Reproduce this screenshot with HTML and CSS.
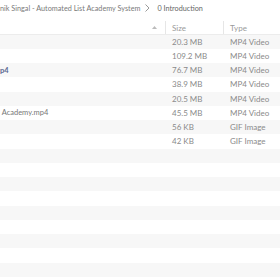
FILE: index.html
```html
<!DOCTYPE html>
<html>
<head>
<meta charset="utf-8">
<link rel="stylesheet" href="styles.css">
</head>
<body>
<div class="crumbs">
  <span class="crumb">nik Singal - Automated List Academy System</span>
  <svg class="chev" width="5" height="8" viewBox="0 0 5 8"><path d="M0.5 0.5 L4 4 L0.5 7.5" fill="none" stroke="#999" stroke-width="1"/></svg>
  <span class="crumb cur">0 Introduction</span>
</div>
<div class="list">
  <div class="row head">
    <div class="c name"><svg class="sort" width="5" height="3" viewBox="0 0 5 3"><path d="M0 3 L2.5 0 L5 3 Z" fill="#bbb"/></svg></div>
    <div class="c size">Size</div>
    <div class="c type">Type</div>
  </div>
  <div class="row"><div class="c name"></div><div class="c size">20.3 MB</div><div class="c type">MP4 Video</div></div>
  <div class="row"><div class="c name"></div><div class="c size">109.2 MB</div><div class="c type">MP4 Video</div></div>
  <div class="row"><div class="c name hl">p4</div><div class="c size">76.7 MB</div><div class="c type">MP4 Video</div></div>
  <div class="row"><div class="c name"></div><div class="c size">38.9 MB</div><div class="c type">MP4 Video</div></div>
  <div class="row"><div class="c name"></div><div class="c size">20.5 MB</div><div class="c type">MP4 Video</div></div>
  <div class="row"><div class="c name">&nbsp;Academy.mp4</div><div class="c size">45.5 MB</div><div class="c type">MP4 Video</div></div>
  <div class="row"><div class="c name"></div><div class="c size">56 KB</div><div class="c type">GIF Image</div></div>
  <div class="row"><div class="c name"></div><div class="c size">42 KB</div><div class="c type">GIF Image</div></div>
  <div class="row"></div>
  <div class="row"></div>
  <div class="row"></div>
  <div class="row"></div>
  <div class="row"></div>
  <div class="row"></div>
  <div class="row"></div>
  <div class="row"></div>
  <div class="row"></div>
  <div class="row"></div>
</div>
</body>
</html>
```

FILE: styles.css
```css
html, body {
  margin: 0;
  padding: 0;
  background: #fff;
  overflow: hidden;
  width: 280px;
  height: 280px;
}
body {
  font-family: "Lato", "Open Sans", sans-serif;
  font-size: 8px;
  color: #8a8a8a;
}
.crumbs {
  height: 16px;
  display: flex;
  align-items: center;
  white-space: nowrap;
  padding-left: 0;
  font-size: 7.25px;
}
.crumb {
  color: #7a7a7a;
}
.crumb.cur {
  color: #666;
  margin-left: 7px;
}
.chev {
  margin-left: 5px;
}
.list {
  padding-top: 5px;
}
.row {
  display: grid;
  grid-template-columns: 165px 58px 1fr;
  height: 14.25px;
  align-items: center;
  white-space: nowrap;
}
.row:nth-child(even) {
  background: #f7f7f7;
}
.row.head {
  height: 13.5px;
  border-bottom: 1px solid #ececec;
  box-sizing: border-box;
  align-items: stretch;
}
.row.head .c {
  display: flex;
  align-items: center;
  color: #9a9a9a;
  padding-top: 1px;
}
.row.head .size,
.row.head .type {
  border-left: 1px solid #e6e6e6;
}
.row.head .name {
  justify-content: flex-end;
  padding-right: 8px;
}
.row.head .size { padding-left: 6px; }
.row.head .type { padding-left: 6px; }
.c {
  overflow: hidden;
}
.size {
  padding-left: 7px;
}
.type {
  padding-left: 7px;
}
.name {
  color: #777;
  font-size: 7.5px;
}
.name.hl {
  color: #5a6890;
  font-weight: 700;
}
```
